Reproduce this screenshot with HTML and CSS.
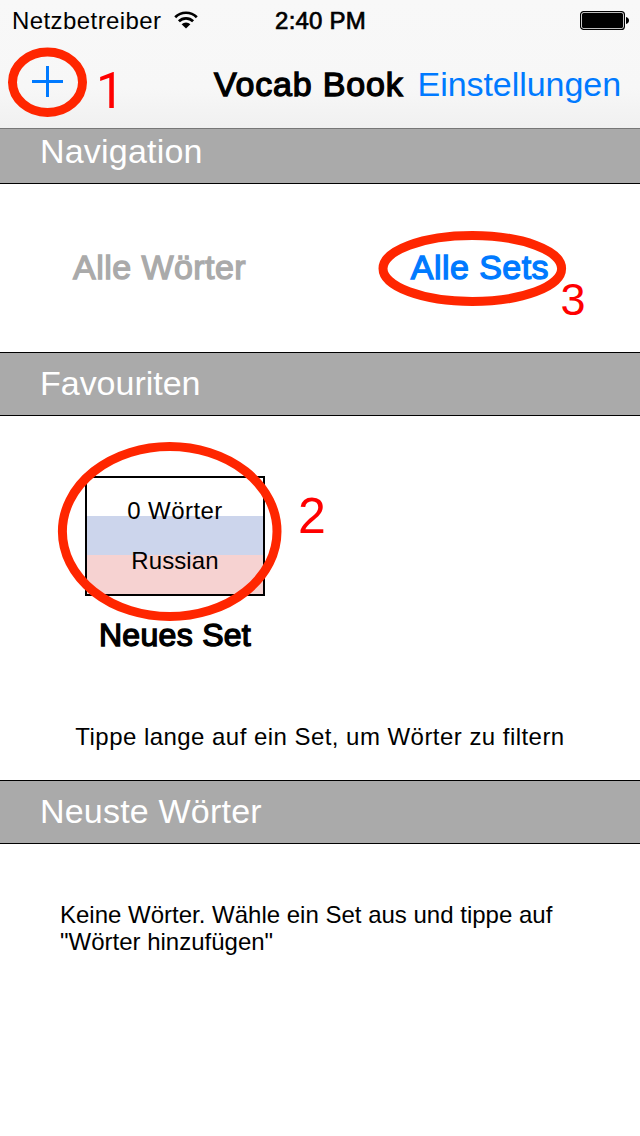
FILE: index.html
```html
<!DOCTYPE html>
<html lang="de">
<head>
<meta charset="utf-8">
<title>Vocab Book</title>
<link rel="stylesheet" href="styles.css">
</head>
<body>
<div class="screen">
  <header class="top">
    <div class="status">
      <div class="carrier">
        <span>Netzbetreiber</span>
        <svg class="wifi" width="24" height="18" viewBox="0 0 24 18">
          <path d="M1.200 6.200a15.300 15.300 0 0 1 21.600 0M4.900 10.300a10 10 0 0 1 14.200 0" fill="none" stroke="#000" stroke-width="2.700"/>
          <path d="M7.600 13.200a6.300 6.300 0 0 1 8.800 0L12 17.600z"/>
        </svg>
      </div>
      <span class="time">2:40 PM</span>
      <svg class="battery" width="50" height="20" viewBox="0 0 50 20">
        <rect x=".6" y=".6" width="43.800" height="17.800" rx="3" fill="#fff" stroke="#000" stroke-width="1.200"/>
        <rect x="2" y="2" width="41" height="15" rx="1.500"/>
        <path d="M46 6c1.900.3 3 1.600 3 3.500s-1.100 3.200-3 3.500z"/>
      </svg>
    </div>
    <nav class="navbar">
      <svg class="plus" width="31" height="31" viewBox="0 0 31 31"><path d="M0 15.500h31M15.500 0v31" stroke="#007aff" stroke-width="3"/></svg>
      <h1 class="title">Vocab Book</h1>
      <a class="settings">Einstellungen</a>
    </nav>
  </header>
  <h2 class="bar bar-first">Navigation</h2>
  <section class="links">
    <span class="link muted">Alle Wörter</span>
    <span class="link">Alle Sets</span>
  </section>
  <h2 class="bar bar-tight">Favouriten</h2>
  <section class="favourites">
    <div class="set">
      <div class="flag">
        <span class="count">0 Wörter</span>
        <span class="lang">Russian</span>
      </div>
      <div class="set-name">Neues Set</div>
    </div>
    <p class="hint">Tippe lange auf ein Set, um Wörter zu filtern</p>
  </section>
  <h2 class="bar">Neuste Wörter</h2>
  <p class="empty">Keine Wörter. Wähle ein Set aus und tippe auf<br>"Wörter hinzufügen"</p>
  <svg class="marks" width="640" height="1136" viewBox="0 0 640 1136">
    <g class="rings">
      <ellipse cx="47.500" cy="82.300" rx="35" ry="30.200"/>
      <ellipse cx="169.700" cy="531.500" rx="107.300" ry="85"/>
      <ellipse cx="472.300" cy="268.500" rx="89.300" ry="33"/>
    </g>
    <text class="digit one" x="96" y="108">1</text>
    <text class="digit two" x="298" y="533">2</text>
    <text class="digit three" x="560.500" y="315">3</text>
  </svg>
</div>
</body>
</html>
```

FILE: styles.css
```css
* { box-sizing: border-box; }
body { margin: 0; background: #fff; }
h1, h2, p { margin: 0; font-weight: 400; }
.screen {
  position: relative;
  width: 640px;
  height: 1136px;
  overflow: hidden;
  background: #fff;
  color: #000;
  font-family: "Liberation Sans", Arial, sans-serif;
  font-size: 24px;
}
.top {
  height: 129px;
  background: linear-gradient(#f8f8f8 0, #f7f7f7 88px, #f0f0f0 128px);
  border-bottom: 1px solid #777;
}
.status {
  display: grid;
  grid-template-columns: 1fr auto 1fr;
  align-items: center;
  height: 42px;
  padding: 0 11px 0 12px;
  line-height: 42px;
}
.carrier { display: flex; align-items: center; gap: 12px; letter-spacing: .42px; }
.wifi { margin-top: -2px; }
.time { letter-spacing: .2px; -webkit-text-stroke: .7px #000; }
.battery { justify-self: end; margin-right: -1px; }
.navbar {
  display: flex;
  align-items: center;
  height: 86px;
  padding: 0 19px 0 32px;
  font-size: 34px;
  line-height: 84px;
}
.plus { margin-top: -7px; }
.title { margin-left: 151px; margin-top: -2px; font-size: 34px; letter-spacing: .8px; -webkit-text-stroke: 1.300px #000; }
.settings { margin-left: auto; margin-top: -2px; color: #007aff; letter-spacing: -.05px; }
.bar {
  height: 64px;
  padding-left: 40px;
  border: 1px solid #000;
  border-width: 1px 0;
  background: #aaa;
  color: #fff;
  font-size: 34px;
  line-height: 60px;
  letter-spacing: .2px;
}
.bar-first { height: 55px; border-top: 0; line-height: 44px; }
.bar-tight { letter-spacing: -.02px; }
.links {
  display: flex;
  justify-content: space-between;
  height: 168px;
  padding: 0 91px 0 73px;
  line-height: 167px;
}
.link { color: #007aff; font-size: 34px; letter-spacing: .45px; -webkit-text-stroke: 1.300px currentColor; }
.muted { color: #aaa; }
.favourites { height: 364px; padding-top: 60px; }
.set { width: 180px; margin-left: 85px; text-align: center; }
.flag {
  display: flex;
  flex-direction: column;
  height: 120px;
  padding-top: 8px;
  border: 2px solid #000;
  background: linear-gradient(#fff 38px, #ccd5ec 38px, #ccd5ec 77.500px, #f6d2d1 77.500px);
  line-height: 50px;
}
.count { letter-spacing: .45px; }
.lang { letter-spacing: .1px; }
.set-name { font-size: 32px; line-height: 78px; letter-spacing: .3px; -webkit-text-stroke: 1.400px #000; }
.hint { margin-top: 43px; text-align: center; line-height: 40px; letter-spacing: .46px; }
.empty { padding: 57px 0 0 60px; line-height: 27px; }
.marks { position: absolute; inset: 0; pointer-events: none; }
.rings { fill: none; stroke: #ff2600; stroke-width: 9; }
.digit { fill: #f00; }
.one { font-family: Roboto, sans-serif; font-size: 50px; }
.two { font-size: 50px; }
.three { font-size: 45px; }
```
